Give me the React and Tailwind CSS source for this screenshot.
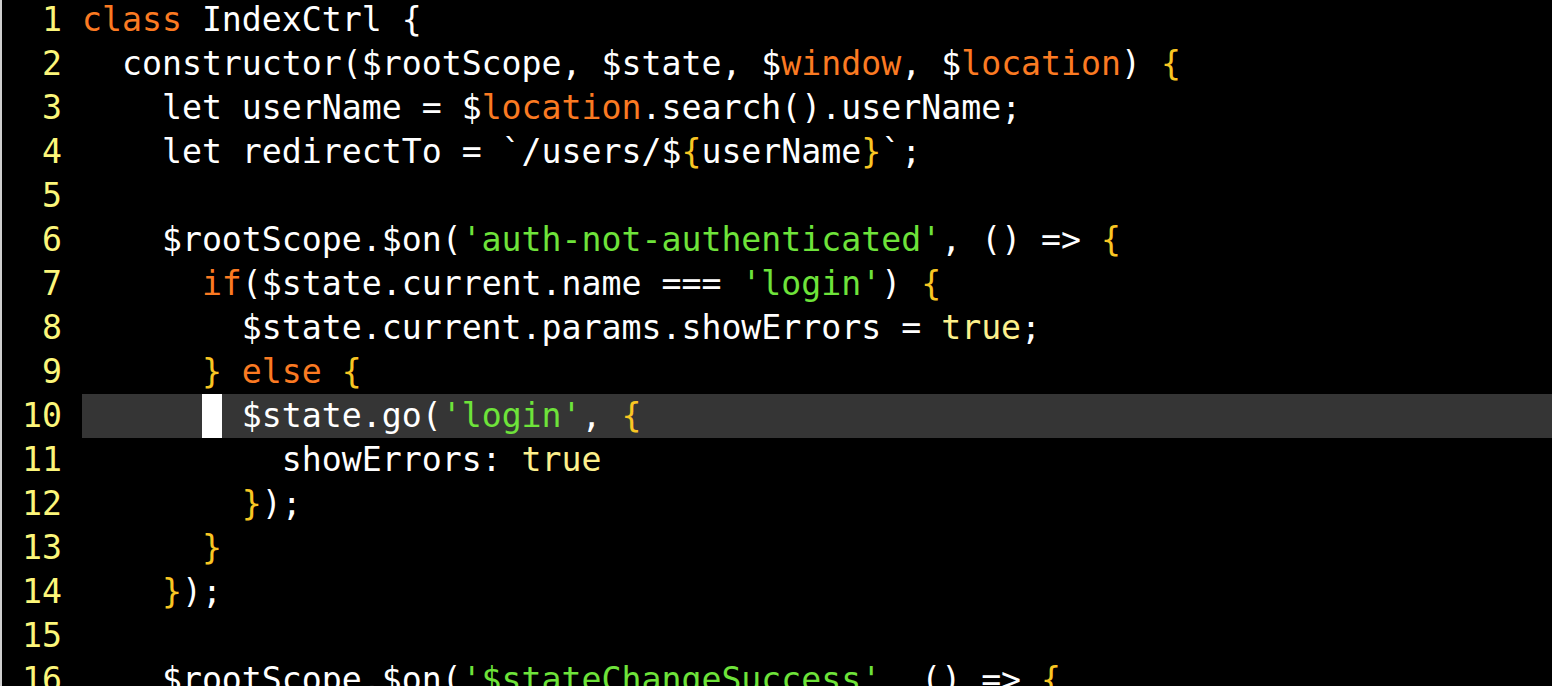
import React from 'react';

const W = 'text-white';
const O = 'text-[#fb7a22]';
const G = 'text-[#6ee33a]';
const B = 'text-[#f9c623]';
const T = 'text-[#fdf08c]';

// each line is a list of [text, colorClass]
const lines = [
  [['class', O], [' IndexCtrl {', W]],
  [['  constructor($rootScope, $state, $', W], ['window', O], [', $', W], ['location', O], [') ', W], ['{', B]],
  [['    let userName = $', W], ['location', O], ['.search().userName;', W]],
  [['    let redirectTo = `/users/$', W], ['{', B], ['userName', W], ['}', B], ['`;', W]],
  [],
  [['    $rootScope.$on(', W], ["'auth-not-authenticated'", G], [', () => ', W], ['{', B]],
  [['      ', W], ['if', O], ['($state.current.name === ', W], ["'login'", G], [') ', W], ['{', B]],
  [['        $state.current.params.showErrors = ', W], ['true', T], [';', W]],
  [['      ', W], ['}', B], [' ', W], ['else', O], [' ', W], ['{', B]],
  [['      ', W], ['cursor', 'cursor'], [' $state.go(', W], ["'login'", G], [', ', W], ['{', B]],
  [['          showErrors: ', W], ['true', T]],
  [['        ', W], ['}', B], [');', W]],
  [['      ', W], ['}', B]],
  [['    ', W], ['}', B], [');', W]],
  [],
  [['    $rootScope.$on(', W], ["'$stateChangeSuccess'", G], [', () => ', W], ['{', B]],
];

const Line = ({ num, parts, active }) => (
  <div className="flex h-[44px] items-center">
    <span className="w-[60px] shrink-0 text-right text-[#fcf67a]">{num}</span>
    <span className="w-[20px] shrink-0" />
    <div className={`flex-1 h-full flex items-center whitespace-pre ${active ? 'bg-[#353535]' : ''}`}>
      {parts.map(([text, cls], i) =>
        cls === 'cursor' ? (
          <span key={i} className="inline-block w-[20px] h-full bg-white" />
        ) : (
          <span key={i} className={cls}>{text}</span>
        )
      )}
    </div>
  </div>
);

export default function App() {
  return (
    <div className="h-[686px] overflow-hidden bg-black border-l-2 border-[#cfcfcf]">
      <div
        className="-mt-[2px] text-[33.2px] leading-[44px]"
        style={{ fontFamily: '"DejaVu Sans Mono", "Liberation Mono", monospace' }}
      >
        {lines.map((parts, i) => (
          <Line key={i} num={i + 1} parts={parts} active={i === 9} />
        ))}
      </div>
    </div>
  );
}
